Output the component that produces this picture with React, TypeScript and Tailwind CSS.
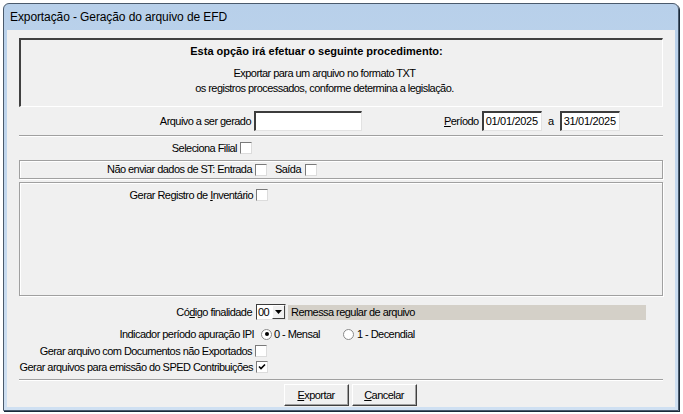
import React from "react";

const font = { fontFamily: '"Liberation Sans", Arial, sans-serif' };

function Check({ checked = false }: { checked?: boolean }) {
    return (
        <span className="inline-flex w-[12px] h-[12px] bg-white border border-t-[#7a7a7a] border-l-[#7a7a7a] border-b-[#dcdcdc] border-r-[#dcdcdc] items-center justify-center shrink-0">
            {checked && (
                <svg width="8" height="8" viewBox="0 0 8 8">
                    <path d="M1 3.5 L3 5.5 L7 1.5" stroke="#000" strokeWidth="1.6" fill="none" />
                </svg>
            )}
        </span>
    );
}

function Radio({ checked = false }: { checked?: boolean }) {
    return (
        <span className="inline-flex w-[11px] h-[11px] rounded-full bg-white border border-[#8a8a8a] items-center justify-center shrink-0">
            {checked && <span className="w-[4px] h-[4px] rounded-full bg-black" />}
        </span>
    );
}

function Field({ w, value = "" }: { w: string; value?: string }) {
    return (
        <div className={`${w} h-[20px] bg-white border-t-2 border-l-2 border-t-[#3c3c3c] border-l-[#3c3c3c] border-b border-r border-b-[#e2e2e2] border-r-[#e2e2e2] pl-[2px] text-[11px] tracking-[-0.3px] leading-[17px] text-black`}>
            {value}
        </div>
    );
}

function Sep() {
    return <div className="mx-[12px] h-[2px] border-t border-t-[#a0a0a0] border-b border-b-white" />;
}

export default function App() {
    return (
        <div className="w-[683px] h-[414px] bg-white pt-[3px] pl-[3px]" style={font}>
            <div className="w-[676px] h-[408px] border border-[#4a5a6c] rounded-t-[6px] flex flex-col bg-gradient-to-b from-[#b8d0ea] to-[#cfe0f2] shadow-[1px_1px_0_#1a2a3a]">
                {/* Title bar */}
                <div className="h-[26px] flex items-center pl-[6px] text-[12px] tracking-[-0.1px] text-black">
                    Exportação - Geração do arquivo de EFD
                </div>

                {/* Client area */}
                <div className="flex-1 mx-[3px] mb-[3px] bg-[#f0f0f0] text-[11px] tracking-[-0.55px] text-black flex flex-col">
                    {/* Description panel */}
                    <div className="mx-[12px] mt-[8px] h-[69px] border-t-2 border-l-2 border-t-[#404040] border-l-[#404040] border-b border-r border-b-white border-r-white flex flex-col items-center pt-[4px]">
                        <div className="mr-[50px] font-bold tracking-normal leading-[14px]">
                            Esta opção irá efetuar o seguinte procedimento:
                        </div>
                        <div className="mr-[34px] mt-[8px] leading-[15px]">Exportar para um arquivo no formato TXT</div>
                        <div className="mr-[34px] leading-[15px]">os registros processados, conforme determina a legislação.</div>
                    </div>

                    {/* Arquivo / Período */}
                    <div className="h-[20px] mt-[4px] flex items-center">
                        <div className="w-[247px] text-right pr-[3px]">
                            Arquivo a ser <span className="underline">g</span>erado
                        </div>
                        <Field w="w-[108px]" />
                        <div className="ml-[82px] pr-[3px]">
                            <span className="underline">P</span>eríodo
                        </div>
                        <Field w="w-[60px]" value="01/01/2025" />
                        <div className="w-[18px] text-center">a</div>
                        <Field w="w-[60px]" value="31/01/2025" />
                    </div>

                    <div className="mt-[4px]">
                        <Sep />
                    </div>

                    {/* Seleciona Filial */}
                    <div className="h-[20px] mt-[1px] flex items-center">
                        <div className="w-[233px] text-right pr-[3px]">Seleciona Filial</div>
                        <Check />
                    </div>

                    {/* ST box */}
                    <div className="mx-[12px] mt-[2px] h-[19px] border border-[#a0a0a0] shadow-[inset_1px_1px_0_white,1px_1px_0_white] flex items-center">
                        <div className="w-[235px] text-right pr-[3px]">Não enviar dados de ST: Entrada</div>
                        <Check />
                        <div className="ml-[8px] pr-[4px]">Saída</div>
                        <Check />
                    </div>

                    {/* Inventário box */}
                    <div className="mx-[12px] mt-[3px] h-[114px] border border-[#a0a0a0] shadow-[inset_1px_1px_0_white,1px_1px_0_white] pt-[5px]">
                        <div className="h-[14px] flex items-center">
                            <div className="w-[236px] text-right pr-[3px]">
                                Gerar Registro de <span className="underline">I</span>nventário
                            </div>
                            <Check />
                        </div>
                    </div>

                    {/* Código finalidade */}
                    <div className="h-[16px] mt-[8px] flex items-center">
                        <div className="w-[249px] text-right pr-[4px]">
                            Có<span className="underline">d</span>igo finalidade
                        </div>
                        <div className="h-[16px] w-[30px] bg-white border border-t-[#3c3c3c] border-l-[#3c3c3c] border-b-[#e2e2e2] border-r-[#e2e2e2] flex">
                            <div className="flex-1 leading-[14px] pl-[1px]">00</div>
                            <div className="w-[13px] h-full bg-[#f0f0f0] border border-t-white border-l-white border-b-[#404040] border-r-[#404040] flex items-center justify-center">
                                <svg width="7" height="4" viewBox="0 0 7 4">
                                    <path d="M0 0 H7 L3.5 4 Z" fill="#000" />
                                </svg>
                            </div>
                        </div>
                        <div className="ml-[2px] w-[358px] h-[15px] bg-[#d4d0c8] leading-[15px] pl-[3px]">
                            Remessa regular de arquivo
                        </div>
                    </div>

                    {/* Indicador IPI */}
                    <div className="h-[16px] mt-[6px] flex items-center">
                        <div className="w-[254px] text-right pr-[7px]">Indicador período apuração IPI</div>
                        <Radio checked />
                        <div className="ml-[2px] w-[69px]">0 - Mensal</div>
                        <Radio />
                        <div className="ml-[3px]">1 - Decendial</div>
                    </div>

                    {/* Documentos */}
                    <div className="h-[16px] mt-[1px] flex items-center">
                        <div className="w-[248px] text-right pr-[3px]">Gerar arquivo com Documentos não Exportados</div>
                        <Check />
                    </div>

                    {/* SPED */}
                    <div className="h-[16px] mt-[0px] flex items-center">
                        <div className="w-[249px] text-right pr-[3px]">Gerar arquivos para emissão do SPED Contribuições</div>
                        <Check checked />
                    </div>

                    <div className="mt-[4px]">
                        <Sep />
                    </div>

                    {/* Buttons */}
                    <div className="mt-[3px] flex justify-center gap-[3px] pl-[18px]">
                        <button className="w-[65px] h-[22px] bg-[#f0f0f0] border border-t-white border-l-white border-b-[#404040] border-r-[#404040] shadow-[inset_-1px_-1px_0_#a0a0a0] text-[11px]">
                            <span className="underline">E</span>xportar
                        </button>
                        <button className="w-[65px] h-[22px] bg-[#f0f0f0] border border-t-white border-l-white border-b-[#404040] border-r-[#404040] shadow-[inset_-1px_-1px_0_#a0a0a0] text-[11px]">
                            <span className="underline">C</span>ancelar
                        </button>
                    </div>
                </div>
            </div>
        </div>
    );
}
